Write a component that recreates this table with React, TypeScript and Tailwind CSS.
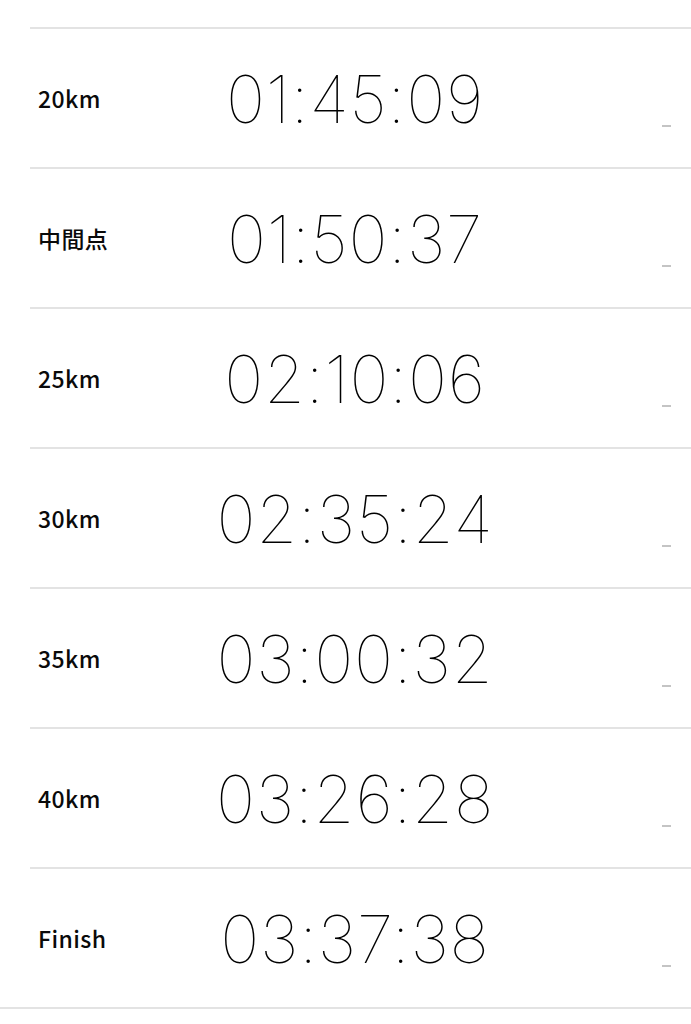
const splits = [
    { label: "20km", time: "01:45:09" },
    { label: "中間点", time: "01:50:37" },
    { label: "25km", time: "02:10:06" },
    { label: "30km", time: "02:35:24" },
    { label: "35km", time: "03:00:32" },
    { label: "40km", time: "03:26:28" },
    { label: "Finish", time: "03:37:38" },
];

const SplitRow = ({ label, time }: { label: string; time: string }) => {
    return (
        <div className="ml-[30px] h-[140px] border-t-2 border-[#e3e3e3] flex items-center relative">
            <div
                className="w-[150px] pl-2 text-[23px] font-medium text-[#0a0a0a] tracking-[0.4px]"
                style={{ fontFamily: '"Noto Sans CJK JP", "Noto Sans", sans-serif' }}
            >
                {label}
            </div>
            <div
                className="w-[350px] text-center text-[66px] [font-weight:130] text-black leading-none tracking-[0.8px] pt-[2px]"
                style={{ fontFamily: "Inter, Roboto, sans-serif" }}
            >
                {time}
            </div>
            <div className="absolute right-[20px] top-[96px] w-[9px] h-[2px] bg-[#c4c4c4]"></div>
        </div>
    );
};

const App = () => {
    return (
        <div className="w-[691px] h-[1024px] bg-white overflow-hidden">
            <div className="h-[27px]"></div>
            {splits.map((item, index) => (
                <SplitRow key={index} label={item.label} time={item.time} />
            ))}
            <div className="h-[2px] bg-[#e3e3e3]"></div>
        </div>
    );
};

export default App;
